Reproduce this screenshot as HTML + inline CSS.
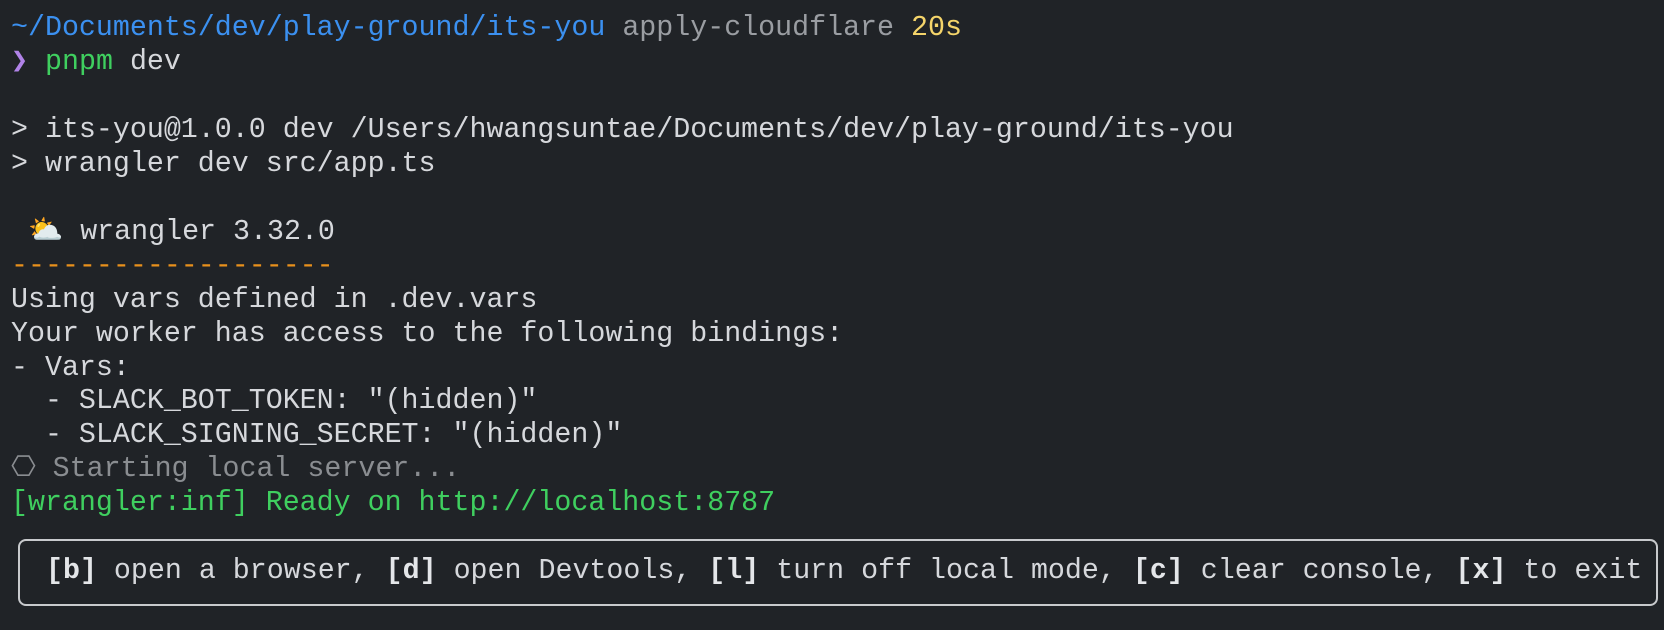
<!DOCTYPE html>
<html><head><style>
html,body{margin:0;padding:0;background:#202327;width:1664px;height:630px;overflow:hidden}
pre{margin:0;position:absolute;left:11px;top:12px;font-family:"Liberation Mono","DejaVu Sans Mono",monospace;font-size:28.3px;line-height:33.95px;color:#d6d8dc;white-space:pre}
.b{color:#3b90f0}.g{color:#3fcf5f}.gr{color:#9a9da2}.y{color:#f4d46a}.p{color:#b183e8}.o{color:#e8901c}.dim{color:#8a8d91}
.box{position:absolute;left:18px;top:539px;width:1640px;height:67px;border:2px solid #c8cacd;border-radius:8px;box-sizing:border-box}
.bt{position:absolute;left:46px;top:554px;font-family:"Liberation Mono","DejaVu Sans Mono",monospace;font-size:28.3px;line-height:34px;color:#d6d8dc;white-space:pre}
b{color:#e4e6e9}
</style></head><body>
<pre><span class="b">~/Documents/dev/play-ground/its-you</span> <span class="gr">apply-cloudflare</span> <span class="y">20s</span>
<span class="p">❯</span> <span class="g">pnpm</span> dev

&gt; its-you@1.0.0 dev /Users/hwangsuntae/Documents/dev/play-ground/its-you
&gt; wrangler dev src/app.ts

 ⛅ wrangler 3.32.0
<span class="o">-------------------</span>
Using vars defined in .dev.vars
Your worker has access to the following bindings:
- Vars:
  - SLACK_BOT_TOKEN: "(hidden)"
  - SLACK_SIGNING_SECRET: "(hidden)"
<span class="dim">⎔ Starting local server...</span>
<span class="g">[wrangler:inf] Ready on http://localhost:8787</span></pre>
<div class="box"></div>
<div class="bt"><b>[b]</b> open a browser, <b>[d]</b> open Devtools, <b>[l]</b> turn off local mode, <b>[c]</b> clear console, <b>[x]</b> to exit</div>
</body></html>
